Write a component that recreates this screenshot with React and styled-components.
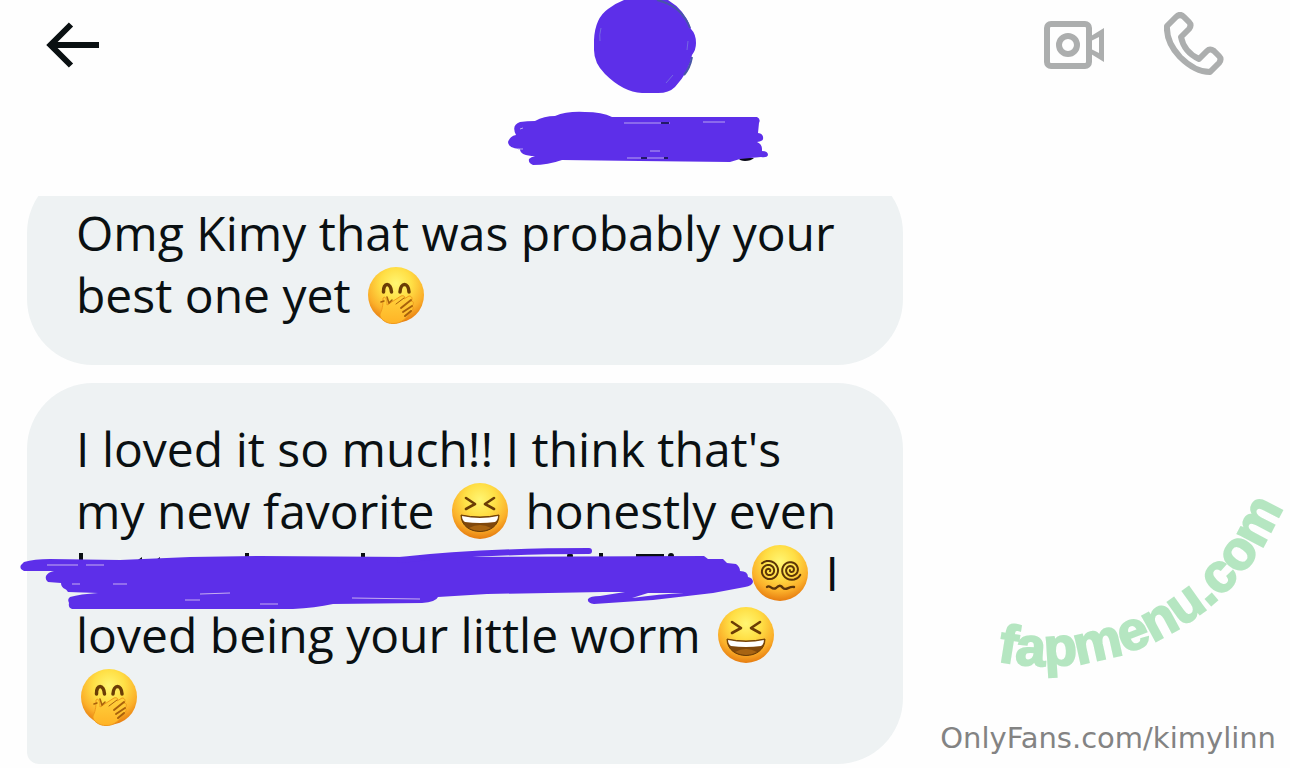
import styled, { createGlobalStyle } from "styled-components";

const GlobalStyle = createGlobalStyle`
  * {
    box-sizing: border-box;
  }
  body {
    margin: 0;
    background: #fefefe;
    color: #0a1012;
    font-family: "Open Sans", "Noto Sans", sans-serif;
  }
`;

// Styled Components
const Page = styled.div`
  min-height: 100vh;
  display: flex;
  flex-direction: column;
`;

const Header = styled.header`
  display: grid;
  grid-template-columns: 1fr auto 1fr;
  align-items: start;
  height: 196px;
  padding: 0 66px 0 46px;
`;

const Profile = styled.div`
  display: flex;
  flex-direction: column;
  align-items: center;
  gap: 12px;
  padding-left: 18px;
`;

const Actions = styled.div`
  display: flex;
  justify-content: flex-end;
  gap: 60px;
  padding-top: 12px;
`;

const IconButton = styled.button`
  display: flex;
  justify-self: start;
  padding: 0;
  margin-top: ${({ $top }) => $top || 0}px;
  border: none;
  background: none;
  color: ${({ $muted }) => ($muted ? "#acaeae" : "#0a1012")};
  cursor: pointer;
`;

const Body = styled.main`
  flex: 1;
  display: flex;
`;

const Thread = styled.section`
  flex: 0 0 70%;
  display: flex;
  flex-direction: column;
  gap: 18px;
  padding-left: 27px;
  overflow: hidden;
`;

const Bubble = styled.div`
  padding: 35px 49px 36px;
  border-radius: ${({ $last }) => ($last ? "66px 66px 66px 12px" : "66px")};
  background: #eef2f3;
`;

// scrolled partly under the header
const ScrolledBubble = styled(Bubble)`
  margin-top: -29px;
  padding-bottom: 39px;
`;

const Line = styled.span`
  display: block;
  height: 62px;
  font-size: 48px;
  font-weight: 500;
  line-height: 62px;
  white-space: nowrap;
`;

const EmojiSvg = styled.svg`
  width: 66px;
  height: 60px;
  vertical-align: -12px;
`;

const Redacted = styled.span`
  position: relative;
  display: inline-block;
  width: 671px;
  height: 62px;
  vertical-align: top;
`;

const Scribble = styled.svg`
  position: absolute;
  left: -60px;
  top: 0;
  width: 740px;
  height: 72px;
`;

const Side = styled.aside`
  flex: 1;
  display: flex;
  flex-direction: column;
  align-items: flex-end;
  justify-content: flex-end;
  padding: 0 14px 10px 0;
`;

const Stamp = styled.svg`
  width: 300px;
  height: 210px;
  margin-bottom: 28px;
  overflow: visible;
`;

const StampText = styled.text`
  font-family: "Liberation Sans", Arial, sans-serif;
  font-size: 54px;
  font-weight: 700;
  fill: #b5e6c1;
  stroke: #b5e6c1;
  stroke-width: 2px;
`;

const Credit = styled.a`
  color: #838383;
  font-family: "DejaVu Sans", sans-serif;
  font-size: 29px;
  line-height: 40px;
  text-decoration: none;
`;

const INK = "#5d2fe9";

const Face = ({ label, children }) => (
  <EmojiSvg viewBox="0 0 66 60" role="img" aria-label={label}>
    <defs>
      <radialGradient id="face" cx="50%" cy="30%" r="70%">
        <stop offset="0" stopColor="#fff673" />
        <stop offset="0.4" stopColor="#ffdf45" />
        <stop offset="0.75" stopColor="#fbb02a" />
        <stop offset="1" stopColor="#e67c10" />
      </radialGradient>
      <linearGradient id="hand" x1="0" y1="0" x2="0" y2="1">
        <stop offset="0" stopColor="#ffd23c" />
        <stop offset="1" stopColor="#ffb326" />
      </linearGradient>
    </defs>
    <circle cx="33" cy="30" r="28" fill="url(#face)" />
    {children}
  </EmojiSvg>
);

const GiggleFace = () => (
  <Face label="face with hand over mouth">
    <g fill="none" stroke="#6b3d06" strokeLinecap="round">
      <path d="M20.500 27 C20 17 28 17 28.500 27" strokeWidth="3.500" />
      <path d="M37 27 C37.500 17 45.500 17 46 27" strokeWidth="3.500" />
    </g>
    <path
      d="M20 33 C22 31 24 33 24 40 L38 31 C41 30 43 32 41 34 L46 31 C49 31 50 34 48 36 C51 36 51 39 49 41 C51 42 50 45 48 46 C44 53 38 59 30 58.500 C24 59 16 54 17 49 C20 43 20 38 20 33 Z"
      fill="url(#hand)"
      stroke="#f09a1c"
      strokeWidth="1"
    />
    <g fill="none" stroke="#a8610c" strokeWidth="1.500" strokeLinecap="round">
      <path d="M18 37 L21 36 M24 32 L26 38 L29 35" />
      <path d="M33 39 L41 33" strokeWidth="1" />
      <path d="M38 43 L48 35 M40 47 L49 41 M42 51 L48 46" strokeWidth="2" />
    </g>
  </Face>
);

const LaughFace = () => (
  <Face label="grinning squinting face">
    <g
      fill="none"
      stroke="#6b3d06"
      strokeWidth="2.600"
      strokeLinecap="round"
      strokeLinejoin="round"
    >
      <path d="M19 17 L28 23 L19 28" />
      <path d="M47 17 L38 23 L47 28" />
    </g>
    <path
      d="M14 34 Q33 38 52 34 C52 56 14 56 14 34 Z"
      fill="#80480b"
      stroke="#6b3d06"
      strokeWidth="1"
    />
    <path d="M15 35 Q33 39 51 35 Q51 39 48 41 Q33 43 18 41 Q15 39 15 35 Z" fill="#fff" />
    <path d="M22 47 Q33 41 44 47 Q33 53 22 47 Z" fill="#a86412" />
  </Face>
);

const spiral = (cx, cy, start, dir) => {
  const points = [];
  for (let i = 0; i <= 60; i++) {
    const angle = start + (dir * i * Math.PI * 4.8) / 60;
    const r = 1 + (i * 9.5) / 60;
    points.push(
      `${(cx + r * Math.cos(angle)).toFixed(1)},${(cy + r * Math.sin(angle)).toFixed(1)}`
    );
  }
  return points.join(" ");
};

const DizzyFace = () => (
  <Face label="face with spiral eyes">
    <g fill="none" stroke="#5b3508" strokeWidth="2" strokeLinecap="round">
      <polyline points={spiral(22, 28, 0.2, -1)} />
      <polyline points={spiral(44, 27, 3, -1)} />
      <path
        d="M20 44 C23 41 25 48 29 45 C32 42 34 42 36 45 C39 48 42 43 47 44"
        strokeWidth="2.400"
      />
    </g>
  </Face>
);

const HiddenWords = () => (
  <Redacted>
    <Scribble viewBox="16 542 740 72" aria-hidden="true">
      <path
        d="M81 553v12M247 553v10M363 553v10M601 553v8"
        stroke="#0a1012"
        strokeWidth="4"
      />
      <path d="M138 560l4 -3v6h-4zM156 560l4 -3v6h-4zM636 554h28v4h-28z" fill="#0a1012" />
      <circle cx="570" cy="556" r="3" fill="#0a1012" />
      <circle cx="671" cy="556" r="3" fill="#0a1012" />
      <path
        d="M24 562 Q34 559 50 559 L120 560 L190 557 L260 556 L410 557 L704 556 L708 559 L723 559 L727 563 L736 564 Q740 567 740 571 Q748 571 748 577 Q753 578 753 582 Q752 586 745 587 L713 593 L653 600 L594 604 Q587 603 588 599 Q590 596 600 596 L625 592 L603 592 L487 594 L438 597 Q436 602 422 603 L333 604 Q315 608 293 609 L72 609 Q68 608 69 603 Q67 599 70 597 Q80 594 98 593 L68 592 Q66 589 65 589 Q61 587 61 583 L48 582 Q45 580 46 576 Q48 572 54 571 L24 571 Q19 569 21 565 Z"
        fill={INK}
      />
      <path
        d="M400 560 Q480 551 589 551"
        fill="none"
        stroke={INK}
        strokeWidth="6"
        strokeLinecap="round"
      />
      <path
        d="M47 565h31M86 565h18M72 584h8M113 584h14M200 594l30 -1M352 598l68 1M185 600h15M260 604h18"
        stroke="#c7aef0"
        strokeWidth="1"
      />
      <path d="M632 598 Q660 594 684 593 L648 593 Z" fill="#eef2f3" />
    </Scribble>
  </Redacted>
);

const App = () => {
  return (
    <>
      <GlobalStyle />
      <Page>
        <Header>
          <IconButton type="button" aria-label="Back" $top={22}>
            <svg width="54" height="46" viewBox="0 0 54 46" fill="none">
              <path
                d="M53 23H5M25 2.500L4.500 23L25 43.500"
                stroke="currentColor"
                strokeWidth="6"
              />
            </svg>
          </IconButton>

          <Profile>
            <svg width="104" height="94" viewBox="0 0 104 94" aria-hidden="true">
              <path
                d="M32 0 H76 Q93 10 99 29 Q104 34 104 43 Q104 50 100 55 Q97 72 83 87 Q77 93 66 93 H50 Q31 92 13 74 Q2 63 2 50 V40 Q3 18 16 9 Q24 3 32 0 Z"
                fill={INK}
              />
              <path
                d="M65 0 Q90 6 98 28 M100 57 Q98 68 92 75"
                fill="none"
                stroke="#4856a8"
                strokeWidth="2"
              />
              <path
                d="M9 28 Q7 35 8 41 M96 41 L95 50 M81 75 L74 83"
                fill="none"
                stroke="#7568e2"
                strokeWidth="1"
              />
            </svg>
            <svg width="280" height="62" viewBox="504 106 280 62" aria-hidden="true">
              <path d="M738 158h16q-3 3 -9 3q-5 0 -7 -3z" fill="#0a0a18" />
              <path
                d="M520 122 Q527 121 535 121 Q544 116 555 116 Q567 111 585 112 Q602 112 612 117 L757 117 Q761 119 759 123 L758 133 Q764 134 763 139 Q763 141 757 142 Q762 144 762 149 L762 151 Q768 151 768 155 Q767 158 761 157 L740 159 L730 162 L640 161 L562 160 Q548 165 533 165 Q528 163 529 159 Q531 157 535 156 Q520 156 520 149 Q508 148 508 142 Q510 136 516 135 Q511 125 520 122 Z"
                fill={INK}
              />
              <path
                d="M624 123h46M703 122h22M627 158h14M646 158h18M650 151h10M520 129l3 -1M518 149l5 0"
                stroke="#b9a4f0"
                strokeWidth="1"
              />
              <path d="M661 123h8M664 158h4M641 158h6" stroke="#231a68" strokeWidth="2" />
            </svg>
          </Profile>

          <Actions>
            <IconButton type="button" aria-label="Video call" $muted $top={8}>
              <svg width="60" height="50" viewBox="0 0 60 50" fill="none">
                <g stroke="currentColor" strokeWidth="6">
                  <rect x="3" y="4" width="42" height="42" rx="4" />
                  <circle cx="24" cy="25" r="9" />
                </g>
                <path
                  d="M47 16 L60 8 V42 L47 34 V29 L55 33 V17 L47 21 Z"
                  fill="currentColor"
                />
              </svg>
            </IconButton>
            <IconButton type="button" aria-label="Call" $muted>
              <svg width="60" height="64" viewBox="0 0 60 64" fill="none">
                <path
                  d="M3 14 L12 5 Q16 1 20 5 L25 10 Q28 13 25 17 L17 25 Q20 40 35 47 L43 39 Q46 36 50 39 L55 44 Q58 47 55 51 L46 60 Q31 60 16 45 Q2 30 3 14 Z"
                  stroke="currentColor"
                  strokeWidth="6"
                  strokeLinejoin="round"
                />
              </svg>
            </IconButton>
          </Actions>
        </Header>

        <Body>
          <Thread>
            <ScrolledBubble>
              <Line>Omg Kimy that was probably your</Line>
              <Line>
                best one yet <GiggleFace />
              </Line>
            </ScrolledBubble>
            <Bubble $last>
              <Line>I loved it so much!! I think that's</Line>
              <Line>
                my new favorite <LaughFace /> honestly even
              </Line>
              <Line>
                <HiddenWords />
                <DizzyFace /> I
              </Line>
              <Line>
                loved being your little worm <LaughFace />
              </Line>
              <Line>
                <GiggleFace />
              </Line>
            </Bubble>
          </Thread>

          <Side>
            <Stamp viewBox="976 480 300 210">
              <path id="arc" d="M997 661 A256 256 0 0 0 1292 480" fill="none" />
              <StampText>
                <textPath href="#arc">fapmenu.com</textPath>
              </StampText>
            </Stamp>
            <Credit href="#">OnlyFans.com/kimylinn</Credit>
          </Side>
        </Body>
      </Page>
    </>
  );
};

export default App;
